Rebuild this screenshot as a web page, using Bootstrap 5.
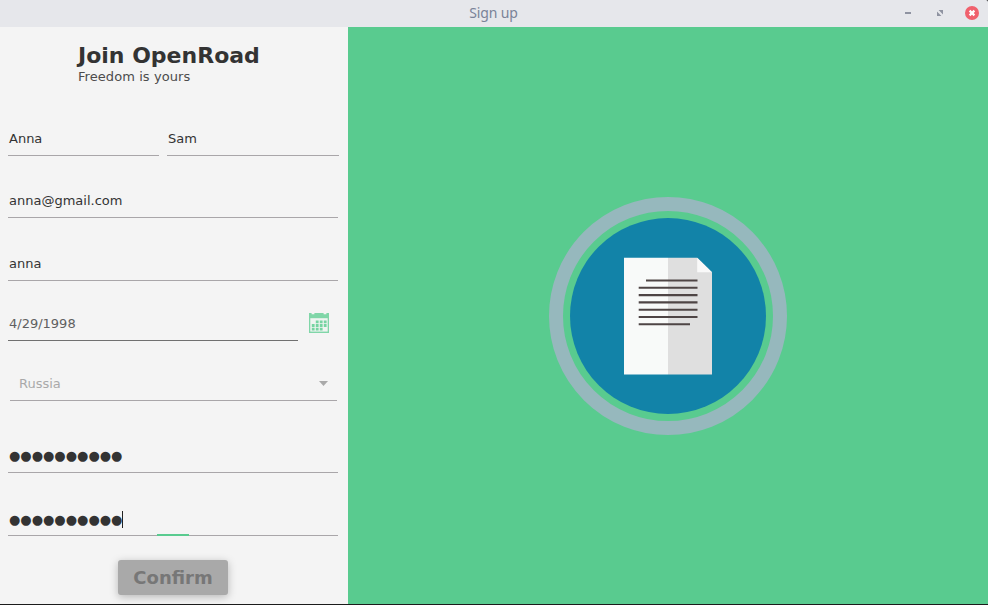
<!DOCTYPE html>
<html lang="en">
<head>
<meta charset="utf-8">
<meta name="viewport" content="width=device-width, initial-scale=1">
<title>Sign up</title>
<link href="https://cdn.jsdelivr.net/npm/bootstrap@5.3.0/dist/css/bootstrap.min.css" rel="stylesheet">
<style>
body { font-family: "DejaVu Sans", sans-serif; font-size: 13px; line-height: 16px; color: #333; background: #1b1b1b; }
.window { height: 604px; }
.titlebar { height: 27px; padding-bottom: 1px; background: #e6e7eb; border-top-right-radius: 2px; display: grid; grid-template-columns: 1fr auto 1fr; }
.window-title { font-family: "Noto Sans", sans-serif; font-size: 14px; line-height: 20px; letter-spacing: -.15px; padding-right: 1px; color: #7a8398; }
.window-actions { gap: 18px; padding-right: 9px; }
.signup { width: 348px; background: #f4f4f4; }
.brand { height: 88px; padding: 15px 0 0 78px; }
.brand h1 { font-size: 22px; line-height: 27px; }
.brand p { color: #4c4c4c; letter-spacing: .07px; }
.field { height: 41px; border-bottom: 1px solid #a9a6a9; padding: 16px 1px 0; white-space: nowrap; }
.names { gap: 8px; padding: 0 9px 0 8px; }
.first { width: 151px; }
.wide { margin: 21px 10px 0 8px; }
.user { margin-top: 22px; }
.birth { margin: 19px 0 0 8px; gap: 11px; }
.calendar { margin-top: 13px; }
.date { width: 290px; color: #606060; border-color: #707070; }
.country { margin: 19px 11px 0 10px; color: #a9a9a9; padding: 16px 9px 0; }
.arrow { margin-top: 5px; }
.pass { margin-top: 31px; }
.repeat { margin-top: 22px; padding-top: 17px; }
.focus-bar { width: 32px; height: 2px; left: 149px; bottom: -1px; background: #59cb8f; }
.caret { width: 1px; height: 17px; margin-top: -1px; background: #222; }
.btn-confirm { width: 110px; height: 35px; margin: 24px 0 0 118px; font-size: 18px; line-height: 1; color: #777; background: #a9a9a9; border-radius: 3px; box-shadow: 0 2px 8px rgba(0,0,0,.25); }
.hero { background: #59cb8f; }
</style>
<script src="https://cdn.jsdelivr.net/npm/bootstrap@5.3.0/dist/js/bootstrap.bundle.min.js"></script>
</head>
<body class="overflow-hidden">
<div class="window d-flex flex-column">
  <header class="titlebar align-items-center">
    <span></span>
    <span class="window-title">Sign up</span>
    <div class="window-actions d-flex justify-content-end align-items-center">
      <svg width="14" height="14" viewBox="0 0 14 14"><path d="M4 6h6v2H4z" fill="#8f93a1"/></svg>
      <svg width="14" height="14" viewBox="0 0 14 14"><path d="M5.6 4H10v4.4zM4 5.6V10h4.4z" fill="#8f93a1"/></svg>
      <svg width="14" height="14" viewBox="0 0 14 14"><circle cx="7" cy="7" r="7" fill="#f0616d"/><path d="M4.6 4.6l4.8 4.8M9.4 4.6l-4.8 4.8" stroke="#fff" stroke-width="2.2"/></svg>
    </div>
  </header>
  <main class="d-flex flex-grow-1">
    <section class="signup d-flex flex-column flex-shrink-0">
      <div class="brand">
        <h1 class="fw-bold mb-0">Join OpenRoad</h1>
        <p class="mb-0">Freedom is yours</p>
      </div>
      <div class="names d-flex">
        <div class="field first">Anna</div>
        <div class="field flex-grow-1">Sam</div>
      </div>
      <div class="field wide">anna@gmail.com</div>
      <div class="field wide user">anna</div>
      <div class="birth d-flex">
        <div class="field date">4/29/1998</div>
        <svg width="20" height="20" viewBox="0 0 20 20" class="calendar">
          <path d="M0 0h2.6v1.2h2.8V0h9.2v1.2h2.8V0H20v20H0z" fill="#80d6a8"/>
          <path d="M1.3 5.2h17.4v13.4H1.3z" fill="#eff4f1"/>
          <path d="M8.2 7.4v2.8M12.2 7.4v2.8M16.2 7.4v2.8M4.2 11.1v2.8M8.2 11.1v2.8M12.2 11.1v2.8M16.2 11.1v2.8M4.2 14.8v2.8M8.2 14.8v2.8M12.2 14.8v2.8" stroke="#76d4a2" stroke-width="2.8"/>
        </svg>
      </div>
      <div class="field country d-flex justify-content-between">
        <span>Russia</span>
        <svg width="9" height="5" viewBox="0 0 9 5" class="arrow"><path d="M0 0h9L4.5 5z" fill="#a9a9a9"/></svg>
      </div>
      <div class="field wide pass">●●●●●●●●●●</div>
      <div class="field wide repeat position-relative d-flex">
        <span>●●●●●●●●●●</span><span class="caret"></span>
        <span class="focus-bar position-absolute"></span>
      </div>
      <button type="button" class="btn btn-confirm fw-bold border-0 p-0">Confirm</button>
    </section>
    <section class="hero flex-grow-1 d-flex align-items-center justify-content-center">
      <svg width="240" height="240" viewBox="548 196 240 240">
        <circle cx="668" cy="316" r="112" fill="none" stroke="#96b8bd" stroke-width="14"/>
        <circle cx="668" cy="316" r="98" fill="#1283a8"/>
        <path d="M624 257.7h44v116.8h-44z" fill="#f8faf9"/>
        <path d="M668 257.7h29.2l14.8 14.6v102.2h-44z" fill="#dfdfdf"/>
        <path d="M697.2 257.7v14.6H712z" fill="#f9f9f9"/>
        <path d="M646 280.5h51.5M638.7 287.8h58.8M638.7 295.1h58.8M638.7 302.4h58.8M638.7 309.7h58.8M638.7 317h58.8M638.7 324.3H690" stroke="#4e4545" stroke-width="2.1"/>
      </svg>
    </section>
  </main>
</div>
</body>
</html>
